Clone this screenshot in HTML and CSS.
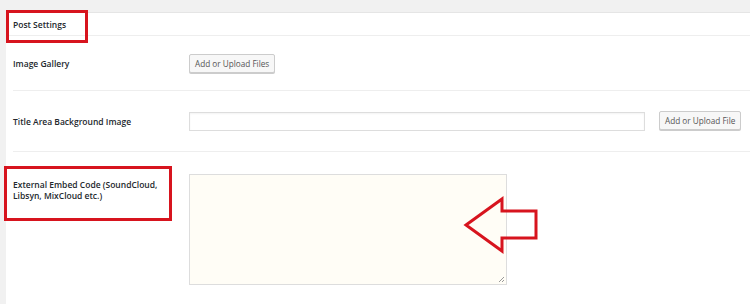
FILE: index.html
```html
<!DOCTYPE html>
<html lang="en">
<head>
<meta charset="UTF-8" />
<title>Post Settings</title>
<link rel="stylesheet" href="styles.css">
</head>
<body>

<div class="panel">
  <div class="panel-head">Post Settings</div>

  <div class="row row-gallery">
    <div class="label">Image Gallery</div>
    <div class="field">
      <span class="btn">Add or Upload Files</span>
    </div>
  </div>

  <div class="row row-title">
    <div class="label">Title Area Background Image</div>
    <div class="field">
      <span class="input"></span>
      <span class="btn">Add or Upload File</span>
    </div>
  </div>

  <div class="row row-embed">
    <div class="label">External Embed Code (SoundCloud,<br>Libsyn, MixCloud etc.)</div>
    <div class="field">
      <div class="textarea">
        <svg class="grip" width="8" height="8" viewBox="0 0 8 8">
          <path d="M7 2 L2 7 M7 5 L5 7" stroke="#999" stroke-width="1" fill="none"/>
        </svg>
      </div>
    </div>
  </div>
</div>

<!-- annotations drawn over the screenshot -->
<div class="mark mark-head"></div>
<div class="mark mark-embed"></div>
<svg class="arrow" width="80" height="60" viewBox="0 0 80 60">
  <path d="M3 30 L39 4 L39 16 L73 16 L73 43 L39 43 L39 56 Z" fill="none" stroke="#d7141e" stroke-width="3" stroke-linejoin="miter"/>
</svg>

</body>
</html>
```

FILE: styles.css
```css
body {
  margin: 0;
  padding: 12px 0 0 6px;
  background: #f1f1f1;
  font-family: "Open Sans", "Noto Sans", Arial, sans-serif;
  color: #23282d;
  height: 292px;
  overflow: hidden;
  position: relative;
}
.panel {
  background: #fff;
  border-top: 1px solid #e5e5e5;
  height: 100%;
}
.panel-head {
  height: 22px;
  line-height: 24px;
  padding-left: 7px;
  font-size: 8.5px;
  font-weight: 600;
  border-bottom: 1px solid #eee;
}
.row {
  display: flex;
  margin-left: 7px;
  border-bottom: 1px solid #eee;
}
.row-gallery {
  height: 54px;
  align-items: center;
}
.row-title {
  height: 60px;
  align-items: center;
}
.row-embed {
  border-bottom: none;
  padding-top: 22px;
}
.label {
  width: 176px;
  flex: none;
  font-size: 8.5px;
  font-weight: 600;
  line-height: 11px;
}
.row-embed .label {
  padding-top: 5px;
}
.field {
  display: flex;
  align-items: center;
  gap: 14px;
}
.btn {
  display: inline-block;
  height: 17px;
  line-height: 17px;
  padding: 0 5px;
  font-size: 8.2px;
  color: #555;
  background: #f7f7f7;
  border: 1px solid #ccc;
  border-radius: 2px;
  box-shadow: 0 1px 0 #ccc;
}
.input {
  display: block;
  width: 454px;
  height: 17px;
  border: 1px solid #ddd;
  box-shadow: inset 0 1px 2px rgb(0 0 0 / 0.05);
}
.row-title .btn {
  margin-top: -1px;
}
.textarea {
  position: relative;
  width: 316px;
  height: 109px;
  background: #fffdf6;
  border: 1px solid #ddd;
}
.grip {
  position: absolute;
  right: 1px;
  bottom: 1px;
}
.mark {
  position: absolute;
  border: 3px solid #d7141e;
}
.mark-head {
  left: 6px;
  top: 10px;
  width: 76px;
  height: 27px;
}
.mark-embed {
  left: 4px;
  top: 166px;
  width: 162px;
  height: 49px;
}
.arrow {
  position: absolute;
  left: 463px;
  top: 195px;
}
```
